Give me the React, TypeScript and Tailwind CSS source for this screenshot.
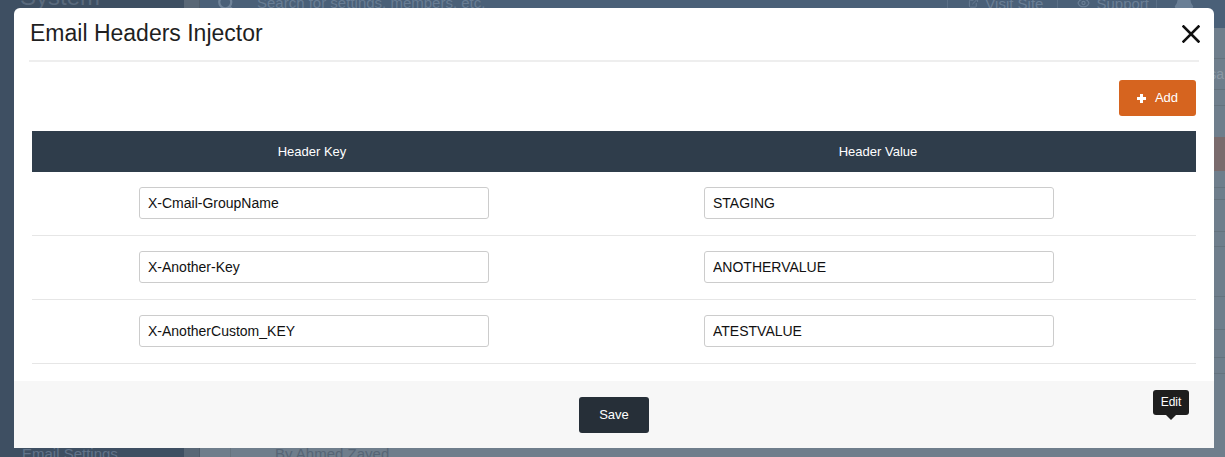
import { Search, Eye, Bell, ExternalLink } from 'lucide-react';

type HeaderRow = { key: string; value: string };

const headerRows: HeaderRow[] = [
  { key: 'X-Cmail-GroupName', value: 'STAGING' },
  { key: 'X-Another-Key', value: 'ANOTHERVALUE' },
  { key: 'X-AnotherCustom_KEY', value: 'ATESTVALUE' },
];

const CloseIcon = () => (
  <svg width="18" height="18" viewBox="0 0 18 18" className="mt-[4px] mr-[-1px]">
    <path d="M1.5 1.5 L16.5 16.5 M16.5 1.5 L1.5 16.5" stroke="#111" strokeWidth="2.6" strokeLinecap="square" />
  </svg>
);

const PlusIcon = () => (
  <svg width="9" height="9" viewBox="0 0 9 9" fill="#fff">
    <path d="M3 0h3v3h3v3H6v3H3V6H0V3h3z" />
  </svg>
);

// admin page sitting behind the dialog backdrop
const BackdropPage = () => (
  <div className="flex h-full">
    <aside className="w-[184px] bg-[#3e4f62] flex flex-col justify-between overflow-hidden">
      <div className="pl-[20px] -mt-[17px] text-[24px] leading-[28px] text-[#5a6a7d]">System</div>
      <div className="pl-[22px] -mb-[6px] text-[15px] leading-[18px] text-[#62748a]">Email Settings</div>
    </aside>
    <div className="w-[16px] bg-[#596776] border-r border-[#4f5c6a]" />
    <div className="flex-1 flex flex-col">
      <header className="h-[28px] bg-[#4a6078] flex items-start overflow-hidden">
        <div className="flex items-center -mt-[7px] pl-[17px] gap-[22px] h-[20px]">
          <Search className="w-[18px] h-[18px] text-[#6f8399]" strokeWidth={3} />
          <span className="text-[15px] text-[#687d94]">Search for settings, members, etc.</span>
        </div>
        <div className="ml-auto flex h-full">
          <div className="flex items-start gap-[6px] border-l border-[#5a6f86] pl-[20px] pr-[14px] -mt-[7px] pt-0 text-[15px] text-[#6a7f96]">
            <ExternalLink className="w-[11px] h-[14px] mt-[3px]" />
            Visit Site
          </div>
          <div className="flex items-start gap-[6px] border-l border-[#5a6f86] pl-[19px] pr-[7px] -mt-[7px] text-[15px] text-[#6a7f96]">
            <Eye className="w-[13px] h-[14px] mt-[3px]" />
            Support
          </div>
          <div className="flex items-start border-l border-[#5a6f86] pl-[14px] pr-[28px] -mt-[8px]">
            <Bell className="w-[26px] h-[22px] text-[#6a7f96]" fill="#6a7f96" />
          </div>
        </div>
      </header>
      <main className="flex-1 flex bg-[#6f7e8c]">
        <div className="w-[31px] border-r border-[#66747f]" />
        <div className="flex-1 flex flex-col">
          <div className="flex-1 flex justify-end">
            <div className="w-[24px] pt-[30px] flex flex-col text-[14px] text-[#8b98a4]">
              <div className="h-[31px] border-t border-[#65737e] leading-[30px] -ml-[4px]">Visa</div>
              <div className="h-[16px] border-t border-[#65737e]" />
              <div className="h-[32px] border-t border-[#65737e]" />
              <div className="h-[34px] bg-[#7a6b6d] leading-[34px] text-[#9d8f90]">Pl</div>
              <div className="h-[16px]" />
              <div className="h-[12px] border-t border-[#65737e]" />
              <div className="h-[32px] border-t border-[#65737e]" />
              <div className="h-[15px] border-t border-[#65737e]" />
              <div className="h-[50px] border-t border-[#65737e]" />
              <div className="h-[33px] border-t border-[#65737e]" />
              <div className="h-[28px] border-t border-[#65737e]" />
              <div className="h-[16px] border-t border-[#65737e]" />
              <div className="h-[16px] border-t border-[#65737e]" />
            </div>
          </div>
          <div className="pl-[44px] h-[12px] text-[15px] leading-[18px] text-[#566575]">By Ahmed Zayed</div>
        </div>
      </main>
    </div>
  </div>
);

const HeadersDialog = () => (
  <div className="absolute left-[14px] top-[8px] w-[1200px] rounded-t-[6px] bg-white overflow-hidden">
    <div className="px-[15px]">
      <div className="flex items-start justify-between border-b-2 border-[#eeeeee] pt-[13px] pb-[14px]">
        <h4 className="pl-px text-[23px] leading-[25px] text-[#1f1f1f]">Email Headers Injector</h4>
        <CloseIcon />
      </div>
    </div>

    <div className="px-[18px] pt-[18px] pb-[17px]">
      <div className="flex justify-end">
        <button className="h-[36px] w-[77px] flex items-center justify-center gap-[9px] rounded-[3px] bg-[#d6641f] text-[13px] text-white">
          <PlusIcon />
          Add
        </button>
      </div>

      <div className="mt-[15px]">
        <div className="grid grid-cols-[560px_572px_32px] h-[41px] items-center bg-[#2f3d4b] text-[13px] text-white">
          <div className="text-center">Header Key</div>
          <div className="text-center">Header Value</div>
          <div />
        </div>
        {headerRows.map((row) => (
          <div key={row.key} className="grid grid-cols-[560px_572px_32px] pt-[15px] pb-[16px] border-b border-[#e6e6e6]">
            <div className="flex justify-center pl-[4px]">
              <input
                type="text"
                defaultValue={row.key}
                className="w-[350px] h-[32px] px-[8px] rounded-[3px] border border-[#cccccc] text-[14px] text-[#111] outline-none"
              />
            </div>
            <div className="flex justify-center pl-[2px]">
              <input
                type="text"
                defaultValue={row.value}
                className="w-[350px] h-[32px] px-[8px] rounded-[3px] border border-[#cccccc] text-[14px] text-[#111] outline-none"
              />
            </div>
            <div />
          </div>
        ))}
      </div>
    </div>

    <div className="flex justify-center bg-[#f7f7f7] pt-[16px] pb-[15px]">
      <button className="w-[70px] h-[36px] rounded-[3px] bg-[#262f38] text-[13px] text-white">Save</button>
    </div>
  </div>
);

export default function App() {
  return (
    <div className="relative w-[1225px] h-[457px] overflow-hidden font-['Liberation_Sans',Arial,sans-serif]">
      <BackdropPage />
      <HeadersDialog />
      {/* hover tooltip from the page underneath */}
      <div className="absolute left-[1153px] top-[390px] flex flex-col items-center">
        <div className="w-[36px] h-[25px] rounded-[3px] bg-[#1e1e1e] text-[12px] leading-[25px] text-center text-white">Edit</div>
        <div className="w-0 h-0 border-x-[5px] border-x-transparent border-t-[5px] border-t-[#1e1e1e]" />
      </div>
    </div>
  );
}
